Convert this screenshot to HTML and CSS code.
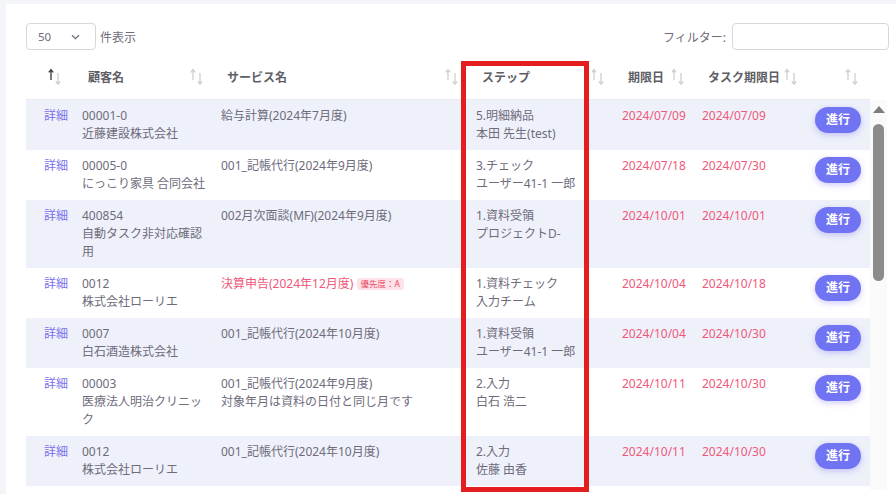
FILE: index.html
```html
<!doctype html>
<html>
<head>
<meta charset="UTF-8">
<title>タスク一覧</title>
<link rel="stylesheet" href="styles.css">
</head>
<body>
<div class="page">
  <div class="card">
    <div class="toolbar">
      <div class="length">
        <div class="select">
          <span>50</span>
          <svg class="chev" width="9" height="6" viewBox="0 0 9 6"><path d="M1 1.2 4.5 4.6 8 1.2" fill="none" stroke="#6e6b7b" stroke-width="1.3"/></svg>
        </div>
        <span class="label">件表示</span>
      </div>
      <div class="filter">
        <span class="label">フィルター:</span>
        <div class="input"></div>
      </div>
    </div>

    <div class="table-area">
      <table class="grid head">
        <colgroup><col class="c0"><col class="c1"><col class="c2"><col class="c3"><col class="c4"><col class="c5"><col class="c6"></colgroup>
        <tr>
          <th><svg class="sort" width="14" height="17" viewBox="0 0 14 17"><path d="M3 12V2M0.8 4.4 3 1.6 5.2 4.4" fill="none" stroke="#444" stroke-width="1.4"/><path d="M10 5v11M7.8 13.4 10 16.2 12.2 13.4" fill="none" stroke="#cfcfcf" stroke-width="1.3"/></svg></th>
          <th>顧客名<svg class="sort" width="14" height="17" viewBox="0 0 14 17"><path d="M3 12V2M0.8 4.4 3 1.6 5.2 4.4" fill="none" stroke="#cfcfcf" stroke-width="1.3"/><path d="M10 5v11M7.8 13.4 10 16.2 12.2 13.4" fill="none" stroke="#cfcfcf" stroke-width="1.3"/></svg></th>
          <th>サービス名<svg class="sort" width="14" height="17" viewBox="0 0 14 17"><path d="M3 12V2M0.8 4.4 3 1.6 5.2 4.4" fill="none" stroke="#cfcfcf" stroke-width="1.3"/><path d="M10 5v11M7.8 13.4 10 16.2 12.2 13.4" fill="none" stroke="#cfcfcf" stroke-width="1.3"/></svg></th>
          <th>ステップ<svg class="sort" width="14" height="17" viewBox="0 0 14 17"><path d="M3 12V2M0.8 4.4 3 1.6 5.2 4.4" fill="none" stroke="#cfcfcf" stroke-width="1.3"/><path d="M10 5v11M7.8 13.4 10 16.2 12.2 13.4" fill="none" stroke="#cfcfcf" stroke-width="1.3"/></svg></th>
          <th>期限日<svg class="sort" width="14" height="17" viewBox="0 0 14 17"><path d="M3 12V2M0.8 4.4 3 1.6 5.2 4.4" fill="none" stroke="#cfcfcf" stroke-width="1.3"/><path d="M10 5v11M7.8 13.4 10 16.2 12.2 13.4" fill="none" stroke="#cfcfcf" stroke-width="1.3"/></svg></th>
          <th>タスク期限日<svg class="sort" width="14" height="17" viewBox="0 0 14 17"><path d="M3 12V2M0.8 4.4 3 1.6 5.2 4.4" fill="none" stroke="#cfcfcf" stroke-width="1.3"/><path d="M10 5v11M7.8 13.4 10 16.2 12.2 13.4" fill="none" stroke="#cfcfcf" stroke-width="1.3"/></svg></th>
          <th><svg class="sort" width="14" height="17" viewBox="0 0 14 17"><path d="M3 12V2M0.8 4.4 3 1.6 5.2 4.4" fill="none" stroke="#cfcfcf" stroke-width="1.3"/><path d="M10 5v11M7.8 13.4 10 16.2 12.2 13.4" fill="none" stroke="#cfcfcf" stroke-width="1.3"/></svg></th>
        </tr>
      </table>

      <div class="body-row">
        <div class="scroll-body">
          <table class="grid body">
            <colgroup><col class="c0"><col class="c1"><col class="c2"><col class="c3"><col class="c4"><col class="c5"><col class="c6"></colgroup>
            <tr class="odd">
              <td><a class="detail">詳細</a></td>
              <td>00001-0<br>近藤建設株式会社</td>
              <td>給与計算(2024年7月度)</td>
              <td>5.明細納品<br>本田 先生(test)</td>
              <td class="due">2024/07/09</td>
              <td class="due">2024/07/09</td>
              <td><span class="btn">進行</span></td>
            </tr>
            <tr>
              <td><a class="detail">詳細</a></td>
              <td>00005-0<br>にっこり家具 合同会社</td>
              <td>001_記帳代行(2024年9月度)</td>
              <td>3.チェック<br>ユーザー41-1 一郎</td>
              <td class="due">2024/07/18</td>
              <td class="due">2024/07/30</td>
              <td><span class="btn">進行</span></td>
            </tr>
            <tr class="odd">
              <td><a class="detail">詳細</a></td>
              <td>400854<br>自動タスク非対応確認用</td>
              <td>002月次面談(MF)(2024年9月度)</td>
              <td>1.資料受領<br>プロジェクトD-</td>
              <td class="due">2024/10/01</td>
              <td class="due">2024/10/01</td>
              <td><span class="btn">進行</span></td>
            </tr>
            <tr>
              <td><a class="detail">詳細</a></td>
              <td>0012<br>株式会社ローリエ</td>
              <td><span class="urgent">決算申告(2024年12月度)</span> <span class="badge">優先度：A</span></td>
              <td>1.資料チェック<br>入力チーム</td>
              <td class="due">2024/10/04</td>
              <td class="due">2024/10/18</td>
              <td><span class="btn">進行</span></td>
            </tr>
            <tr class="odd">
              <td><a class="detail">詳細</a></td>
              <td>0007<br>白石酒造株式会社</td>
              <td>001_記帳代行(2024年10月度)</td>
              <td>1.資料受領<br>ユーザー41-1 一郎</td>
              <td class="due">2024/10/04</td>
              <td class="due">2024/10/30</td>
              <td><span class="btn">進行</span></td>
            </tr>
            <tr>
              <td><a class="detail">詳細</a></td>
              <td>00003<br>医療法人明治クリニック</td>
              <td>001_記帳代行(2024年9月度)<br>対象年月は資料の日付と同じ月です</td>
              <td>2.入力<br>白石 浩二</td>
              <td class="due">2024/10/11</td>
              <td class="due">2024/10/30</td>
              <td><span class="btn">進行</span></td>
            </tr>
            <tr class="odd">
              <td><a class="detail">詳細</a></td>
              <td>0012<br>株式会社ローリエ</td>
              <td>001_記帳代行(2024年10月度)</td>
              <td>2.入力<br>佐藤 由香</td>
              <td class="due">2024/10/11</td>
              <td class="due">2024/10/30</td>
              <td><span class="btn">進行</span></td>
            </tr>
          </table>
        </div>
        <div class="scrollbar">
          <div class="arrow"></div>
          <div class="thumb"></div>
        </div>
      </div>

      <div class="mark"></div>
    </div>
  </div>
</div>
</body>
</html>
```

FILE: styles.css
```css
*{
    margin:0;
    padding:0;
    box-sizing:border-box;
}
body{
    width:896px;
    height:494px;
    overflow:hidden;
    background:#f4f5f8;
    font-family:"Noto Sans","Noto Sans CJK JP",sans-serif;
    font-size:12px;
    color:#6e6b7b;
}
.page{
    padding:4px 0 0 6px;
}
.card{
    background:#fff;
    height:490px;
    padding:19px 7px 0 20px;
}
/* 上のツールバー */
.toolbar{
    display:flex;
    justify-content:space-between;
    align-items:center;
    height:27px;
}
.length,.filter{
    display:flex;
    align-items:center;
}
.select{
    width:70px;
    height:27px;
    border:1px solid #d8d6de;
    border-radius:4px;
    display:flex;
    align-items:center;
    padding:0 15px 0 11px;
    justify-content:space-between;
    font-size:11.5px;
}
.length .label{
    margin-left:4px;
}
.filter .label{
    margin-right:6px;
}
.input{
    width:157px;
    height:27px;
    border:1px solid #d8d6de;
    border-radius:4px;
}
/* テーブル */
.table-area{
    position:relative;
    margin-top:7px;
    width:861px;
}
.grid{
    width:844px;
    table-layout:fixed;
    border-collapse:collapse;
}
.c0{width:48px;}
.c1{width:139px;}
.c2{width:255px;}
.c3{width:146px;}
.c4{width:80px;}
.c5{width:113px;}
.c6{width:63px;}
.head th{
    position:relative;
    height:42px;
    text-align:left;
    padding:0 0 1px 14px;
    font-weight:bold;
    color:#5e5e66;
    border-bottom:1px solid #ebe9f1;
    white-space:nowrap;
}
.head th .sort{
    position:absolute;
    right:9px;
    top:11px;
}
.head th:first-child .sort{
    right:12px;
}
.head th:last-child .sort{
    right:11px;
}
.body-row{
    display:flex;
    height:390px;
}
.scroll-body{
    width:844px;
    overflow:hidden;
}
.body td{
    vertical-align:top;
    padding:7px 8px 7px;
    line-height:18px;
}
.body tr.odd td{
    background:#eef1fa;
}
.body td:first-child{
    padding:7px 0 7px 18px;
    white-space:nowrap;
}
.body td:nth-child(2){
    padding-right:3px;
}
.detail{
    color:#7a70ee;
}
.due{
    color:#f0587a;
    white-space:nowrap;
}
.urgent{
    color:#f0587a;
}
.badge{
    display:inline-block;
    font-size:8.5px;
    line-height:12px;
    padding:0 4px;
    border-radius:3px;
    background:#fde3e8;
    color:#ea4d6a;
    vertical-align:1px;
}
.btn{
    display:inline-block;
    width:46px;
    height:26px;
    line-height:26px;
    text-align:center;
    border-radius:13px;
    background:#7174f2;
    color:#fff;
    font-weight:bold;
    box-shadow:0 2px 6px rgba(115,103,240,.35);
}
.body td:last-child{
    padding-left:8px;
}
/* スクロールバー */
.scrollbar{
    width:17px;
    background:#fafafa;
    display:flex;
    flex-direction:column;
    align-items:center;
    padding-top:6px;
}
.arrow{
    width:0;
    height:0;
    border-left:6px solid transparent;
    border-right:6px solid transparent;
    border-bottom:7px solid #7d7d7d;
}
.thumb{
    margin-top:11px;
    width:11px;
    height:157px;
    border-radius:6px;
    background:#8b8b8b;
}
/* 赤い枠 */
.mark{
    position:absolute;
    left:435px;
    top:4px;
    width:128px;
    height:431px;
    border:5px solid #e41e1e;
}
```
